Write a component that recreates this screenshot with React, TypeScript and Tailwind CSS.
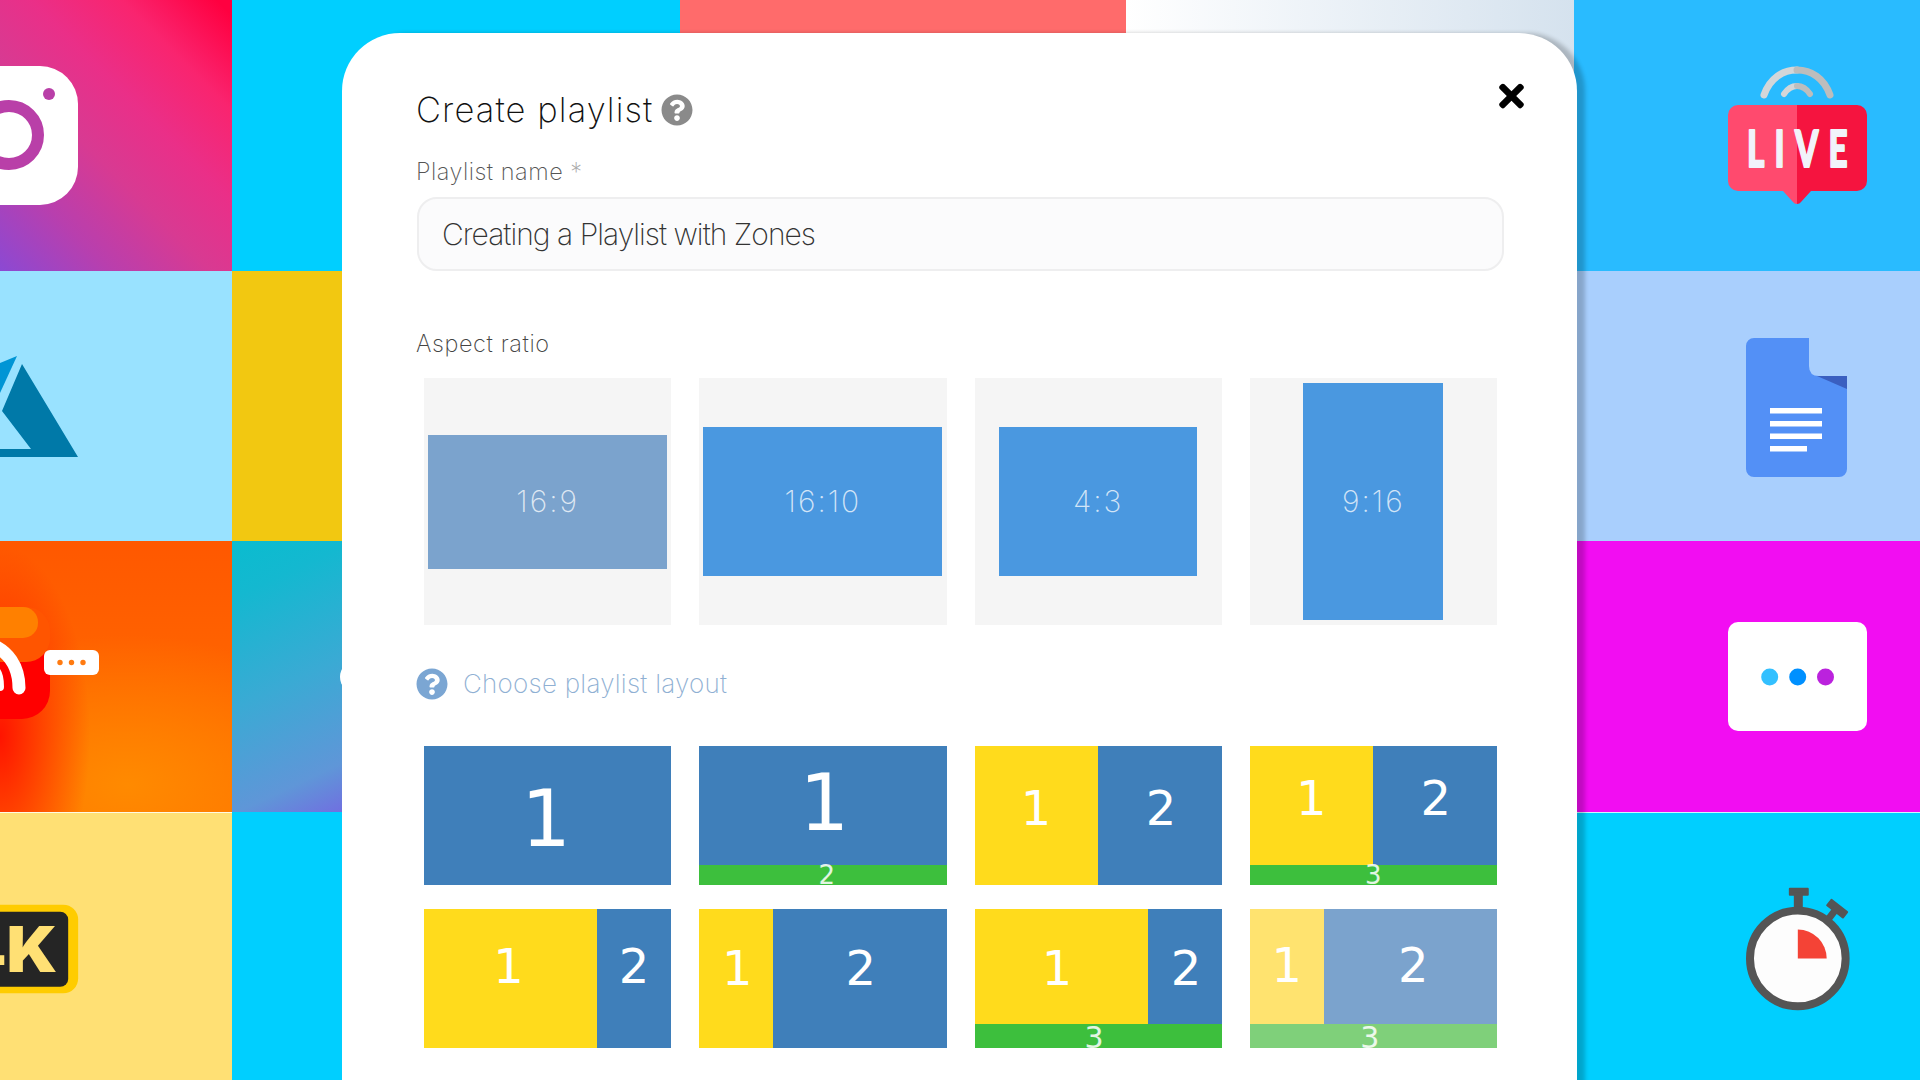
import { FaQuestionCircle, FaTimes } from "react-icons/fa";

function Z({ c, children }: { c: string; children: React.ReactNode }) {
  return (
    <div className={`flex items-center justify-center font-['DejaVu_Sans',sans-serif] font-normal leading-none ${c}`}>
      <span>{children}</span>
    </div>
  );
}

const Y = "bg-[#ffdb1c] text-white";
const B = "bg-[#3f7fba] text-white";
const G = "bg-[#3dbf3d] text-white/85";

function Ratio({ box, label }: { box: string; label: string }) {
  return (
    <div className="h-[247px] bg-[#f5f5f5] flex items-center justify-center">
      <div className={`flex items-center justify-center text-white/75 text-[30px] font-[250] tracking-[2px] ${box}`}>{label}</div>
    </div>
  );
}

export default function App() {
  return (
    <div className="relative w-[1920px] h-[1080px] overflow-hidden font-['Inter',sans-serif]">
      <div className="grid grid-cols-[232px_448px_446px_448px_346px] grid-rows-[271px_270px_271px_268px] w-full h-full">
        {/* column 1..5, row 1 */}
        <div className="bg-[linear-gradient(45deg,#8b49d3_0%,#b83fae_22%,#d83a92_42%,#ea2f88_60%,#f9246f_78%,#ff0040_97%)]">
          <svg viewBox="0 0 232 271" className="block w-full h-full">
            <rect x="-70" y="66" width="148" height="139" rx="38" fill="#fff" />
            <circle cx="9" cy="135" r="29" fill="none" stroke="#b93fa8" strokeWidth="12" />
            <circle cx="49" cy="94" r="6" fill="#b93fa8" />
          </svg>
        </div>
        <div className="bg-[#00cfff]" />
        <div className="bg-[#ff6b6b]" />
        <div className="bg-[linear-gradient(90deg,#ffffff_0%,#d5e2ee_100%)]" />
        <div className="bg-[#29bbff]">
          <svg viewBox="0 0 346 271" className="block w-full h-full">
            <path d="M190 95 C196 78 209 70 223 70" fill="none" stroke="#d3d6d9" strokeWidth="7" strokeLinecap="round" />
            <path d="M223 70 C237 70 250 78 256 95" fill="none" stroke="#bdbdbd" strokeWidth="7" strokeLinecap="round" />
            <path d="M210 94 C214 88 218 86 223 86" fill="none" stroke="#d3d6d9" strokeWidth="6" strokeLinecap="round" />
            <path d="M223 86 C228 86 232 88 236 94" fill="none" stroke="#bdbdbd" strokeWidth="6" strokeLinecap="round" />
            <path d="M164 105 H223 V204 C221 204 220 203 219 202 L209 191 H164 A10 10 0 0 1 154 181 V115 A10 10 0 0 1 164 105 Z" fill="#ff4a6e" />
            <path d="M223 105 H283 A10 10 0 0 1 293 115 V181 A10 10 0 0 1 283 191 H237 L227 202 C226 203 225 204 223 204 Z" fill="#f5143f" />
            <text transform="translate(173 167) scale(0.64 1)" fontFamily="Lato, sans-serif" fontWeight="900" fontSize="52" letterSpacing="16" stroke="#f1f3fa" strokeWidth="2" strokeLinejoin="round" fill="#f1f3fa">LIVE</text>
          </svg>
        </div>
        {/* row 2 */}
        <div className="bg-[#99e2ff]">
          <svg viewBox="0 0 232 270" className="block w-full h-full">
            <polygon points="22,93 78,186 0,186 0,178 31,178 2,140" fill="#0079a8" />
            <polygon points="0,92 17,85 0,122" fill="#0095d5" />
          </svg>
        </div>
        <div className="bg-[#f2c811]" />
        <div className="bg-white" />
        <div className="bg-white" />
        <div className="bg-[#a9cffd]">
          <svg viewBox="0 0 346 270" className="block w-full h-full">
            <path d="M180 67 H235 V95 Q235 105 245 105 H273 V198 A8 8 0 0 1 265 206 H180 A8 8 0 0 1 172 198 V75 A8 8 0 0 1 180 67 Z" fill="#5390f6" />
            <polygon points="243,105 273,105 273,118" fill="#3a5fc0" />
            <rect x="196" y="137" width="52" height="5.5" fill="#fff" />
            <rect x="196" y="150" width="52" height="5.5" fill="#fff" />
            <rect x="196" y="162.5" width="52" height="5.5" fill="#fff" />
            <rect x="196" y="175" width="37" height="5.5" fill="#fff" />
          </svg>
        </div>
        {/* row 3 */}
        <div className="bg-[radial-gradient(ellipse_90px_190px_at_0%_72%,rgba(255,15,0,0.95)_0%,rgba(255,40,0,0.55)_55%,rgba(255,60,0,0)_100%),radial-gradient(ellipse_240px_150px_at_55%_90%,#ff8a00_0%,rgba(255,130,0,0)_100%),linear-gradient(180deg,#ff5800_0%,#ff7000_100%)]">
          <svg viewBox="0 0 232 271" className="block w-full h-full">
            <rect x="-40" y="100" width="90" height="78" rx="28" fill="#ff0000" />
            <rect x="-40" y="66" width="90" height="55" rx="24" fill="#ff5500" />
            <rect x="-40" y="66" width="78" height="31" rx="15" fill="#ff8000" />
            <path d="M-10 103 C8 110 19 125 19 147" fill="none" stroke="#fff" strokeWidth="13" strokeLinecap="round" />
            <path d="M-6 128 C-2 130 0 136 0 146" fill="none" stroke="#fff" strokeWidth="8" strokeLinecap="round" />
            <rect x="44" y="109" width="55" height="25" rx="6" fill="#fff" />
            <circle cx="60" cy="121.5" r="2.7" fill="#ff7a10" />
            <circle cx="71.5" cy="121.5" r="2.7" fill="#ff7a10" />
            <circle cx="83" cy="121.5" r="2.7" fill="#ff7a10" />
          </svg>
        </div>
        <div className="bg-[linear-gradient(155deg,#0abccf_0%,#14b8d0_12%,#3aaad4_35%,#5f96d8_57%,#7070e0_67%)]" />
        <div className="bg-white" />
        <div className="bg-white" />
        <div className="bg-[#f20df2]">
          <svg viewBox="0 0 346 271" className="block w-full h-full">
            <rect x="154" y="81" width="139" height="109" rx="10" fill="#fff" />
            <circle cx="195.7" cy="136" r="8.5" fill="#33c0ff" />
            <circle cx="223.7" cy="136" r="8.5" fill="#0090ff" />
            <circle cx="251.5" cy="136" r="8.5" fill="#bb22dd" />
          </svg>
        </div>
        {/* row 4 */}
        <div className="bg-[#ffe074] border-t border-white/80">
          <svg viewBox="0 0 232 268" className="block w-full h-full">
            <rect x="-60" y="92" width="138" height="89" rx="15" fill="#ffcc00" />
            <rect x="-60" y="99" width="128" height="75.5" rx="8" fill="#252525" />
            <text transform="translate(57 160) scale(1.05 1)" textAnchor="end" fontFamily="Inter, sans-serif" fontWeight="900" fontSize="64" fill="#ffe074">4K</text>
          </svg>
        </div>
        <div className="bg-[#00cfff]" />
        <div className="bg-white" />
        <div className="bg-white" />
        <div className="bg-[#00cfff] border-t border-white/80">
          <svg viewBox="0 0 346 268" className="block w-full h-full">
            <rect x="215" y="75" width="20" height="8" rx="1" fill="#555" />
            <rect x="220" y="80" width="9" height="20" fill="#555" />
            <g transform="rotate(38 263 95)">
              <rect x="253" y="91" width="22" height="9" rx="1" fill="#555" />
              <rect x="260" y="95" width="7" height="18" fill="#555" />
            </g>
            <circle cx="224" cy="146" r="48" fill="#fdfdfd" stroke="#555" strokeWidth="8" />
            <path d="M224 117 A29 29 0 0 1 253 146 H224 Z" fill="#f44336" />
          </svg>
        </div>
      </div>

      {/* modal */}
      <div className="absolute left-[342px] top-[33px] w-[1235px] h-[1060px] bg-white rounded-t-[58px] shadow-[8px_0_4px_rgba(0,0,0,0.2)] pl-[74px] pr-[74px] pt-[57px]">
        <div className="absolute left-[-2px] top-[627px] w-[34px] h-[34px] rounded-full bg-white" />
        <FaTimes className="absolute left-[1157px] top-[45px] text-black w-[25px] h-[36px]" />

        <div className="flex items-center h-[40px]">
          <h1 className="text-[34.5px] font-[250] text-[#111] tracking-[1.1px] leading-none">Create playlist</h1>
          <FaQuestionCircle className="ml-[8px] w-[32px] h-[32px] text-[#8a8a8a]" />
        </div>
        <div className="mt-[27px] h-[30px] text-[23.5px] font-[250] text-[#555] leading-[30px] tracking-[0.5px]">
          Playlist name <span className="text-[#aaa]">*</span>
        </div>
        <div className="mt-[10px] ml-[1px] w-[1087px] h-[74px] rounded-[20px] border-2 border-[#eeeeef] bg-[#fbfbfc] flex items-center pl-[23px] text-[30px] font-[250] text-[#333] tracking-[-0.97px]">
          Creating a Playlist with Zones
        </div>
        <div className="mt-[58px] h-[30px] text-[23.5px] font-[250] text-[#444] leading-[30px] tracking-[0.6px]">Aspect ratio</div>

        <div className="mt-[19px] ml-[8px] w-[1073px] grid grid-cols-4 gap-x-[28px]">
          <Ratio box="w-[239px] h-[134px] bg-[#7ba3cd]" label="16:9" />
          <Ratio box="w-[239px] h-[149px] bg-[#4a98e0]" label="16:10" />
          <Ratio box="w-[198px] h-[149px] bg-[#4a98e0]" label="4:3" />
          <Ratio box="w-[140px] h-[237px] bg-[#4a98e0]" label="9:16" />
        </div>

        <div className="mt-[43px] flex items-center h-[32px]">
          <FaQuestionCircle className="w-[32px] h-[32px] text-[#7ba6d3]" />
          <span className="ml-[15px] text-[26px] font-extralight text-[#8fb0d3] tracking-[0.25px] leading-none">Choose playlist layout</span>
        </div>

        <div className="mt-[46px] ml-[8px] w-[1073px] grid grid-cols-4 gap-x-[28px] gap-y-[24px]">
          <div className="h-[139px] flex">
            <Z c={`flex-1 ${B} text-[78px] pt-[6px] pr-[3px]`}>1</Z>
          </div>
          <div className="h-[139px] flex flex-col">
            <Z c={`flex-1 ${B} text-[78px] pb-[5px] pl-[3px]`}>1</Z>
            <Z c={`h-[20px] ${G} text-[26px] pl-[8px]`}>2</Z>
          </div>
          <div className="h-[139px] flex">
            <Z c={`w-[123px] ${Y} text-[48px] pb-[15px]`}>1</Z>
            <Z c={`flex-1 ${B} text-[48px] pb-[15px] pl-[3px]`}>2</Z>
          </div>
          <div className="h-[139px] flex flex-col">
            <div className="flex flex-1">
              <Z c={`w-[123px] ${Y} text-[48px] pb-[16px]`}>1</Z>
              <Z c={`flex-1 ${B} text-[48px] pb-[16px] pl-[2px]`}>2</Z>
            </div>
            <Z c={`h-[20px] ${G} text-[26px]`}>3</Z>
          </div>

          <div className="h-[139px] flex">
            <Z c={`w-[173px] ${Y} text-[48px] pb-[25px] pr-[4px]`}>1</Z>
            <Z c={`flex-1 ${B} text-[48px] pb-[25px]`}>2</Z>
          </div>
          <div className="h-[139px] flex">
            <Z c={`w-[74px] ${Y} text-[48px] pb-[22px] pl-[2px]`}>1</Z>
            <Z c={`flex-1 ${B} text-[48px] pb-[22px] pl-[2px]`}>2</Z>
          </div>
          <div className="h-[139px] flex flex-col">
            <div className="flex flex-1">
              <Z c={`w-[173px] ${Y} text-[48px] pt-[2px] pr-[8px]`}>1</Z>
              <Z c={`flex-1 ${B} text-[48px] pt-[2px] pl-[3px]`}>2</Z>
            </div>
            <Z c={`h-[24px] ${G} text-[30px] pr-[8px] pt-[3px]`}>3</Z>
          </div>
          <div className="h-[139px] flex flex-col">
            <div className="flex flex-1">
              <Z c="w-[74px] bg-[#ffe36f] text-white text-[48px] pb-[4px]">1</Z>
              <Z c="flex-1 bg-[#7ba3cd] text-white text-[48px] pb-[4px] pl-[6px]">2</Z>
            </div>
            <Z c="h-[24px] bg-[#7fd07a] text-white/85 text-[30px] pr-[7px] pt-[3px]">3</Z>
          </div>
        </div>
      </div>
    </div>
  );
}
